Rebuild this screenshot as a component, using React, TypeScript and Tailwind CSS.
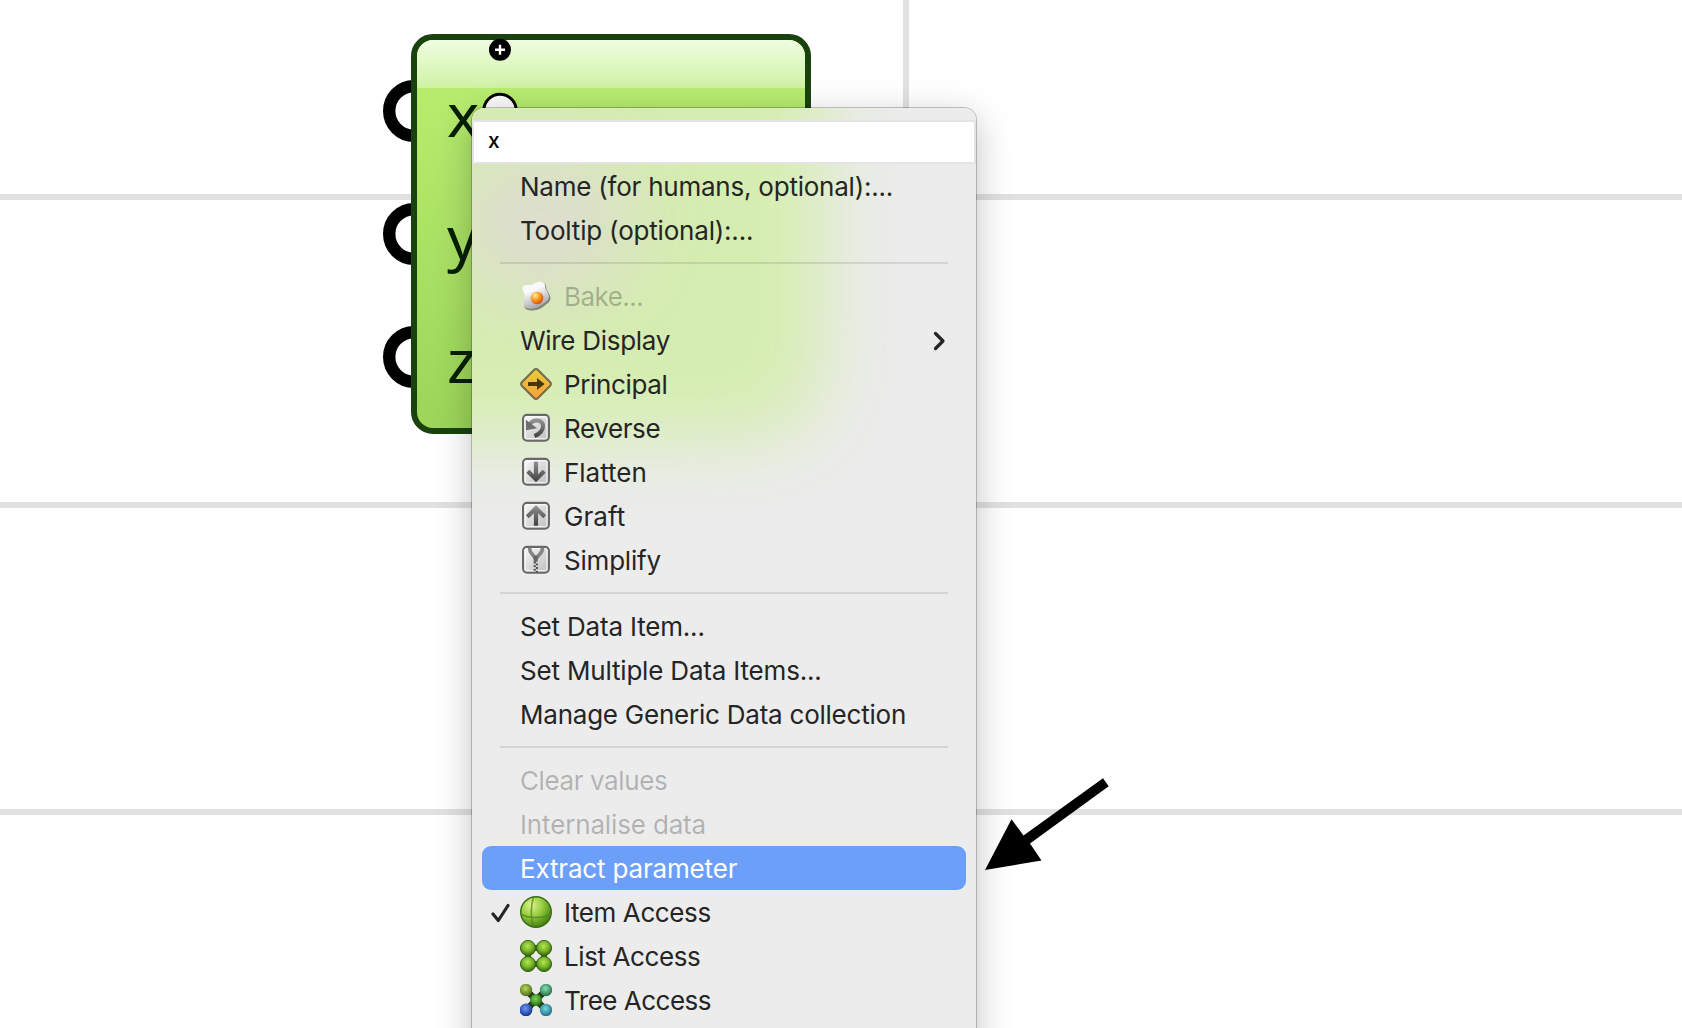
import React from "react";

type IconName = "bake" | "principal" | "reverse" | "flatten" | "graft" | "simplify" | "item" | "list" | "tree";

function Defs() {
  return (
    <svg width="0" height="0" className="absolute" aria-hidden="true">
      <defs>
        <linearGradient id="tile" x1="0" y1="0" x2="1" y2="1">
          <stop offset="0" stopColor="#fafafa" />
          <stop offset="1" stopColor="#bcbcbc" />
        </linearGradient>
        <linearGradient id="sign" x1="0" y1="0" x2="0" y2="1">
          <stop offset="0" stopColor="#e0cf3c" />
          <stop offset="1" stopColor="#ff9d38" />
        </linearGradient>
        <linearGradient id="glyph" x1="0" y1="0" x2="0" y2="1">
          <stop offset="0" stopColor="#909090" />
          <stop offset="1" stopColor="#454545" />
        </linearGradient>
        <linearGradient id="stemDown" gradientUnits="userSpaceOnUse" x1="0" y1="6" x2="0" y2="25">
          <stop offset="0" stopColor="#909090" />
          <stop offset="1" stopColor="#454545" />
        </linearGradient>
        <linearGradient id="white" x1="0" y1="0" x2="0.4" y2="1">
          <stop offset="0.4" stopColor="#fafafc" />
          <stop offset="1" stopColor="#a9a9ae" />
        </linearGradient>
        <radialGradient id="yolk" cx="0.35" cy="0.3" r="0.75">
          <stop offset="0" stopColor="#fff0a0" />
          <stop offset="0.45" stopColor="#f9a22c" />
          <stop offset="1" stopColor="#d9480c" />
        </radialGradient>
        <radialGradient id="sphere" cx="0.35" cy="0.28" r="0.75">
          <stop offset="0" stopColor="#dcf58e" />
          <stop offset="0.5" stopColor="#96cb3c" />
          <stop offset="1" stopColor="#3f7f12" />
        </radialGradient>
        <radialGradient id="ball" cx="0.47" cy="0.38" r="0.62">
          <stop offset="0" stopColor="#b4e552" />
          <stop offset="0.55" stopColor="#78b428" />
          <stop offset="1" stopColor="#2f650c" />
        </radialGradient>
        <radialGradient id="lime" cx="0.45" cy="0.38" r="0.62">
          <stop offset="0" stopColor="#b8d85a" />
          <stop offset="1" stopColor="#4c6e18" />
        </radialGradient>
        <radialGradient id="mint" cx="0.45" cy="0.38" r="0.62">
          <stop offset="0" stopColor="#86e2ae" />
          <stop offset="1" stopColor="#247049" />
        </radialGradient>
        <radialGradient id="blue" cx="0.45" cy="0.38" r="0.62">
          <stop offset="0" stopColor="#6f98f0" />
          <stop offset="1" stopColor="#0f3094" />
        </radialGradient>
        <radialGradient id="cyan" cx="0.45" cy="0.38" r="0.62">
          <stop offset="0" stopColor="#78d5e2" />
          <stop offset="1" stopColor="#1f7184" />
        </radialGradient>
        <radialGradient id="core" cx="0.45" cy="0.4" r="0.62">
          <stop offset="0" stopColor="#7fd957" />
          <stop offset="1" stopColor="#226a12" />
        </radialGradient>
      </defs>
    </svg>
  );
}

function Tile({ children }: { children: React.ReactNode }) {
  return (
    <g transform="translate(0 -0.3)">
      <rect x="3.100" y="3.100" width="25.800" height="25.800" rx="4" fill="url(#tile)" stroke="#696969" strokeWidth="2.200" />
      <rect x="5" y="5" width="22" height="22" rx="2" fill="none" stroke="#ffffff" strokeOpacity="0.7" strokeWidth="1.400" />
      {children}
    </g>
  );
}

const glyphs: Record<IconName, React.ReactNode> = {
  bake: (
    <>
      <path d="M4.500 7C7 4 10 7 14 4.500C18 1 25 1.500 26 5.500C25.500 11 30.500 13 30.500 18.500C30 23 25 25 21.500 28C16 31.500 6 31.500 4.500 27C3.500 21 7 18 4.500 13C3.500 11 3 9 4.500 7Z" fill="#555" opacity="0.65" />
      <path d="M3 6.500C5.500 3.500 10 6.500 13.500 4C17 1 24 .5 25 5C24.500 10 29 12 29 17C28.500 21.500 24 23 20 26C15 29.500 6 30 4 25.500C3 20 6.500 18 4 13C2.500 10 2 8.500 3 6.500Z" fill="url(#white)" />
      <circle cx="17" cy="18" r="6.300" fill="url(#yolk)" />
    </>
  ),
  principal: (
    <>
      <path d="M14 2Q16 .1 18 2L30 14Q31.900 16 30 18L18 30Q16 31.900 14 30L2 18Q.1 16 2 14Z" fill="url(#sign)" stroke="#71684a" strokeWidth="1.900" />
      <path d="M8 14H17V10L24.700 16L17 22V18H8Z" fill="#493707" />
    </>
  ),
  reverse: (
    <Tile>
      <path d="M9.500 13C13 7 22.500 7.500 23 14C23.300 19 19 22.500 14.500 24.500" fill="none" stroke="url(#glyph)" strokeWidth="4" />
      <path d="M5.800 8L6 18.500L17 16.500Z" fill="#6e6e6e" />
    </Tile>
  ),
  flatten: (
    <Tile>
      <path d="M16 6V23M7.800 15.500L16 23.500L24.200 15.500" fill="none" stroke="url(#stemDown)" strokeWidth="4.200" />
    </Tile>
  ),
  graft: (
    <Tile>
      <path d="M16 26V9M7.300 17L16 8.500L24.700 17" fill="none" stroke="url(#stemDown)" strokeWidth="4.200" />
    </Tile>
  ),
  simplify: (
    <Tile>
      <path d="M9.500 4C9.500 10 13 10 15.700 15.500C19 10 22.500 10 22.500 4" fill="none" stroke="#858585" strokeWidth="3.600" />
      <path d="M15.700 12V18" stroke="#666" strokeWidth="4" />
      <path d="M14.700 18V28" stroke="#505050" strokeWidth="2.200" strokeDasharray="1.800 1.800" />
      <path d="M16.900 19.800V28.500" stroke="#505050" strokeWidth="2.200" strokeDasharray="1.800 1.800" />
    </Tile>
  ),
  item: (
    <>
      <circle cx="16" cy="16" r="15.300" fill="url(#sphere)" stroke="#386a14" strokeWidth="1.400" />
      <path d="M13.500 1.500C10.500 10 10.500 22 13.500 30.500M1.500 18.500C9 22.500 23 22.500 30.500 18.500" fill="none" stroke="#4f821d" strokeWidth="1.500" opacity="0.75" />
    </>
  ),
  list: (
    <>
      <path d="M8 8H24V24H8Z" fill="none" stroke="#2f5910" strokeWidth="6" />
      {[[8, 8], [24, 8], [8, 24], [24, 24]].map(([x, y]) => (
        <circle key={`${x}-${y}`} cx={x} cy={y} r="7.600" fill="url(#ball)" stroke="#376812" strokeWidth="1" />
      ))}
    </>
  ),
  tree: (
    <>
      <path d="M7 7L25 25M25 7L7 25" stroke="#1e4218" strokeWidth="6.500" />
      <circle cx="6" cy="6" r="6.200" fill="url(#lime)" />
      <circle cx="26" cy="6" r="6.200" fill="url(#mint)" />
      <circle cx="6" cy="26" r="6.400" fill="url(#blue)" />
      <circle cx="26" cy="26" r="6.200" fill="url(#cyan)" />
      <circle cx="16" cy="16" r="6" fill="url(#core)" />
    </>
  ),
};

function Icon({ name }: { name: IconName }) {
  return (
    <svg width="32" height="32" viewBox="0 0 32 32" className="mr-3 shrink-0">
      {glyphs[name]}
    </svg>
  );
}

type Item = {
  label: string;
  track: string;
  icon?: IconName;
  disabled?: boolean;
  active?: boolean;
  checked?: boolean;
  submenu?: boolean;
};

const sections: Item[][] = [
  [
    { label: "Name (for humans, optional):...", track: "tracking-[-0.23px]" },
    { label: "Tooltip (optional):...", track: "tracking-[-0.19px]" },
  ],
  [
    { label: "Bake...", track: "tracking-[-0.55px]", icon: "bake", disabled: true },
    { label: "Wire Display", track: "tracking-[-0.3px]", submenu: true },
    { label: "Principal", track: "tracking-[-0.35px]", icon: "principal" },
    { label: "Reverse", track: "tracking-[-0.4px]", icon: "reverse" },
    { label: "Flatten", track: "tracking-[-0.02px]", icon: "flatten" },
    { label: "Graft", track: "tracking-[0.05px]", icon: "graft" },
    { label: "Simplify", track: "tracking-[-0.2px]", icon: "simplify" },
  ],
  [
    { label: "Set Data Item...", track: "tracking-[-0.18px]" },
    { label: "Set Multiple Data Items...", track: "tracking-[-0.18px]" },
    { label: "Manage Generic Data collection", track: "tracking-[-0.23px]" },
  ],
  [
    { label: "Clear values", track: "tracking-[-0.4px]", disabled: true },
    { label: "Internalise data", track: "tracking-[-0.15px]", disabled: true },
    { label: "Extract parameter", track: "tracking-[-0.17px]", active: true },
    { label: "Item Access", track: "tracking-[-0.4px]", icon: "item", checked: true },
    { label: "List Access", track: "tracking-[-0.4px]", icon: "list" },
    { label: "Tree Access", track: "tracking-[-0.5px]", icon: "tree" },
  ],
];

function MenuRow({ item }: { item: Item }) {
  const color = item.active ? "bg-[#6b9ffa] text-white" : item.disabled ? "text-black/25" : "text-[#252525]";
  return (
    <div className={`mx-[10px] flex h-11 items-center rounded-[9px] pr-[19px] text-[26px] leading-[42px] ${color}`}>
      <span className="flex w-[38px] shrink-0 justify-start pl-[8px] pt-[2px]">
        {item.checked && (
          <svg width="22" height="24" viewBox="0 0 22 24">
            <path d="M3 13L8.300 19.500L18 4.500" fill="none" stroke="#252525" strokeWidth="3.200" strokeLinecap="round" strokeLinejoin="round" />
          </svg>
        )}
      </span>
      {item.icon && <Icon name={item.icon} />}
      <span className={`whitespace-nowrap pt-[2px] ${item.track}`}>{item.label}</span>
      {item.submenu && (
        <svg width="16" height="26" viewBox="0 -2 16 26" className="ml-auto">
          <path d="M4.500 4.500L12 12L4.500 19.500" fill="none" stroke="#252525" strokeWidth="3.200" strokeLinecap="round" strokeLinejoin="round" />
        </svg>
      )}
    </div>
  );
}

function ContextMenu() {
  return (
    <div className="absolute left-[472px] top-[108px] h-[1000px] w-[504px] rounded-[12px] shadow-[0_0_0_1px_rgba(0,0,0,0.22),0_10px_36px_rgba(0,0,0,0.25)]">
      <div className="relative h-full overflow-hidden rounded-[12px] bg-[#ececec]">
        <div className="absolute -left-[150px] -top-[150px] h-[482px] w-[502px] rounded-[70px] bg-[#d5edb0] blur-[38px]" />
        <div className="absolute -left-[20px] top-[40px] h-[150px] w-[180px] rounded-full bg-[#dfdbd4] opacity-90 blur-[42px]" />
        <div className="relative pt-3">
          <div className="flex h-11 items-center border-2 border-[#e4e4e4] bg-white pb-[3px] pl-[14px] text-[21px] font-medium text-black">x</div>
          {sections.map((section, index) => (
            <React.Fragment key={index}>
              {index > 0 && (
                <div className="flex h-[22px] items-center px-7">
                  <div className="h-[2px] w-full bg-black/10" />
                </div>
              )}
              {section.map((item) => (
                <MenuRow key={item.label} item={item} />
              ))}
            </React.Fragment>
          ))}
        </div>
      </div>
    </div>
  );
}

function Component() {
  return (
    <>
      <svg className="absolute left-[380px] top-[70px]" width="40" height="330" viewBox="380 70 40 330">
        {[111, 234, 357].map((y) => (
          <circle key={y} cx="414" cy={y} r="24.800" fill="#fff" stroke="#000" strokeWidth="12.400" />
        ))}
      </svg>
      <div className="absolute left-[411px] top-[34px] h-[400px] w-[399.5px] overflow-hidden rounded-[22px] border-[6px] border-[#1a420e] bg-linear-to-b from-[#baf072] to-[#9cd558] font-['Noto_Sans'] text-[61px] leading-[123px] text-[#081f02]">
        <div className="h-[47.5px] bg-linear-to-b from-[#effde0] to-[#d0f2a4]" />
        <div className="-mt-[35.5px] pl-[30px]">
          <div>x</div>
          <div>y</div>
          <div>z</div>
        </div>
      </div>
      <svg className="absolute left-[480px] top-[36px]" width="40" height="92" viewBox="0 0 40 92">
        <circle cx="20" cy="13.700" r="11" fill="#000" />
        <path d="M15 13.700H25M20 8.700V18.700" stroke="#fff" strokeWidth="2.400" />
        <circle cx="20" cy="74.500" r="16.200" fill="#fafafa" stroke="#000" strokeWidth="3" />
      </svg>
    </>
  );
}

export default function App() {
  return (
    <div className="relative h-[1028px] w-[1682px] overflow-hidden bg-white font-['Inter',sans-serif]">
      <Defs />
      <div className="absolute left-0 top-[194px] h-[6px] w-full bg-[#e1e1e1]" />
      <div className="absolute left-0 top-[502px] h-[6px] w-full bg-[#e1e1e1]" />
      <div className="absolute left-0 top-[809px] h-[6px] w-full bg-[#e1e1e1]" />
      <div className="absolute left-[903px] top-0 h-full w-[6px] bg-[#e1e1e1]" />
      <Component />
      <ContextMenu />
      <svg className="absolute left-[980px] top-[770px]" width="136" height="110" viewBox="980 770 136 110">
        <path d="M985 870L1011.500 819.300L1023.500 835.500L1103 778.200L1108.700 786.200L1030 843.500L1041.500 860.500Z" fill="#000" />
      </svg>
    </div>
  );
}
